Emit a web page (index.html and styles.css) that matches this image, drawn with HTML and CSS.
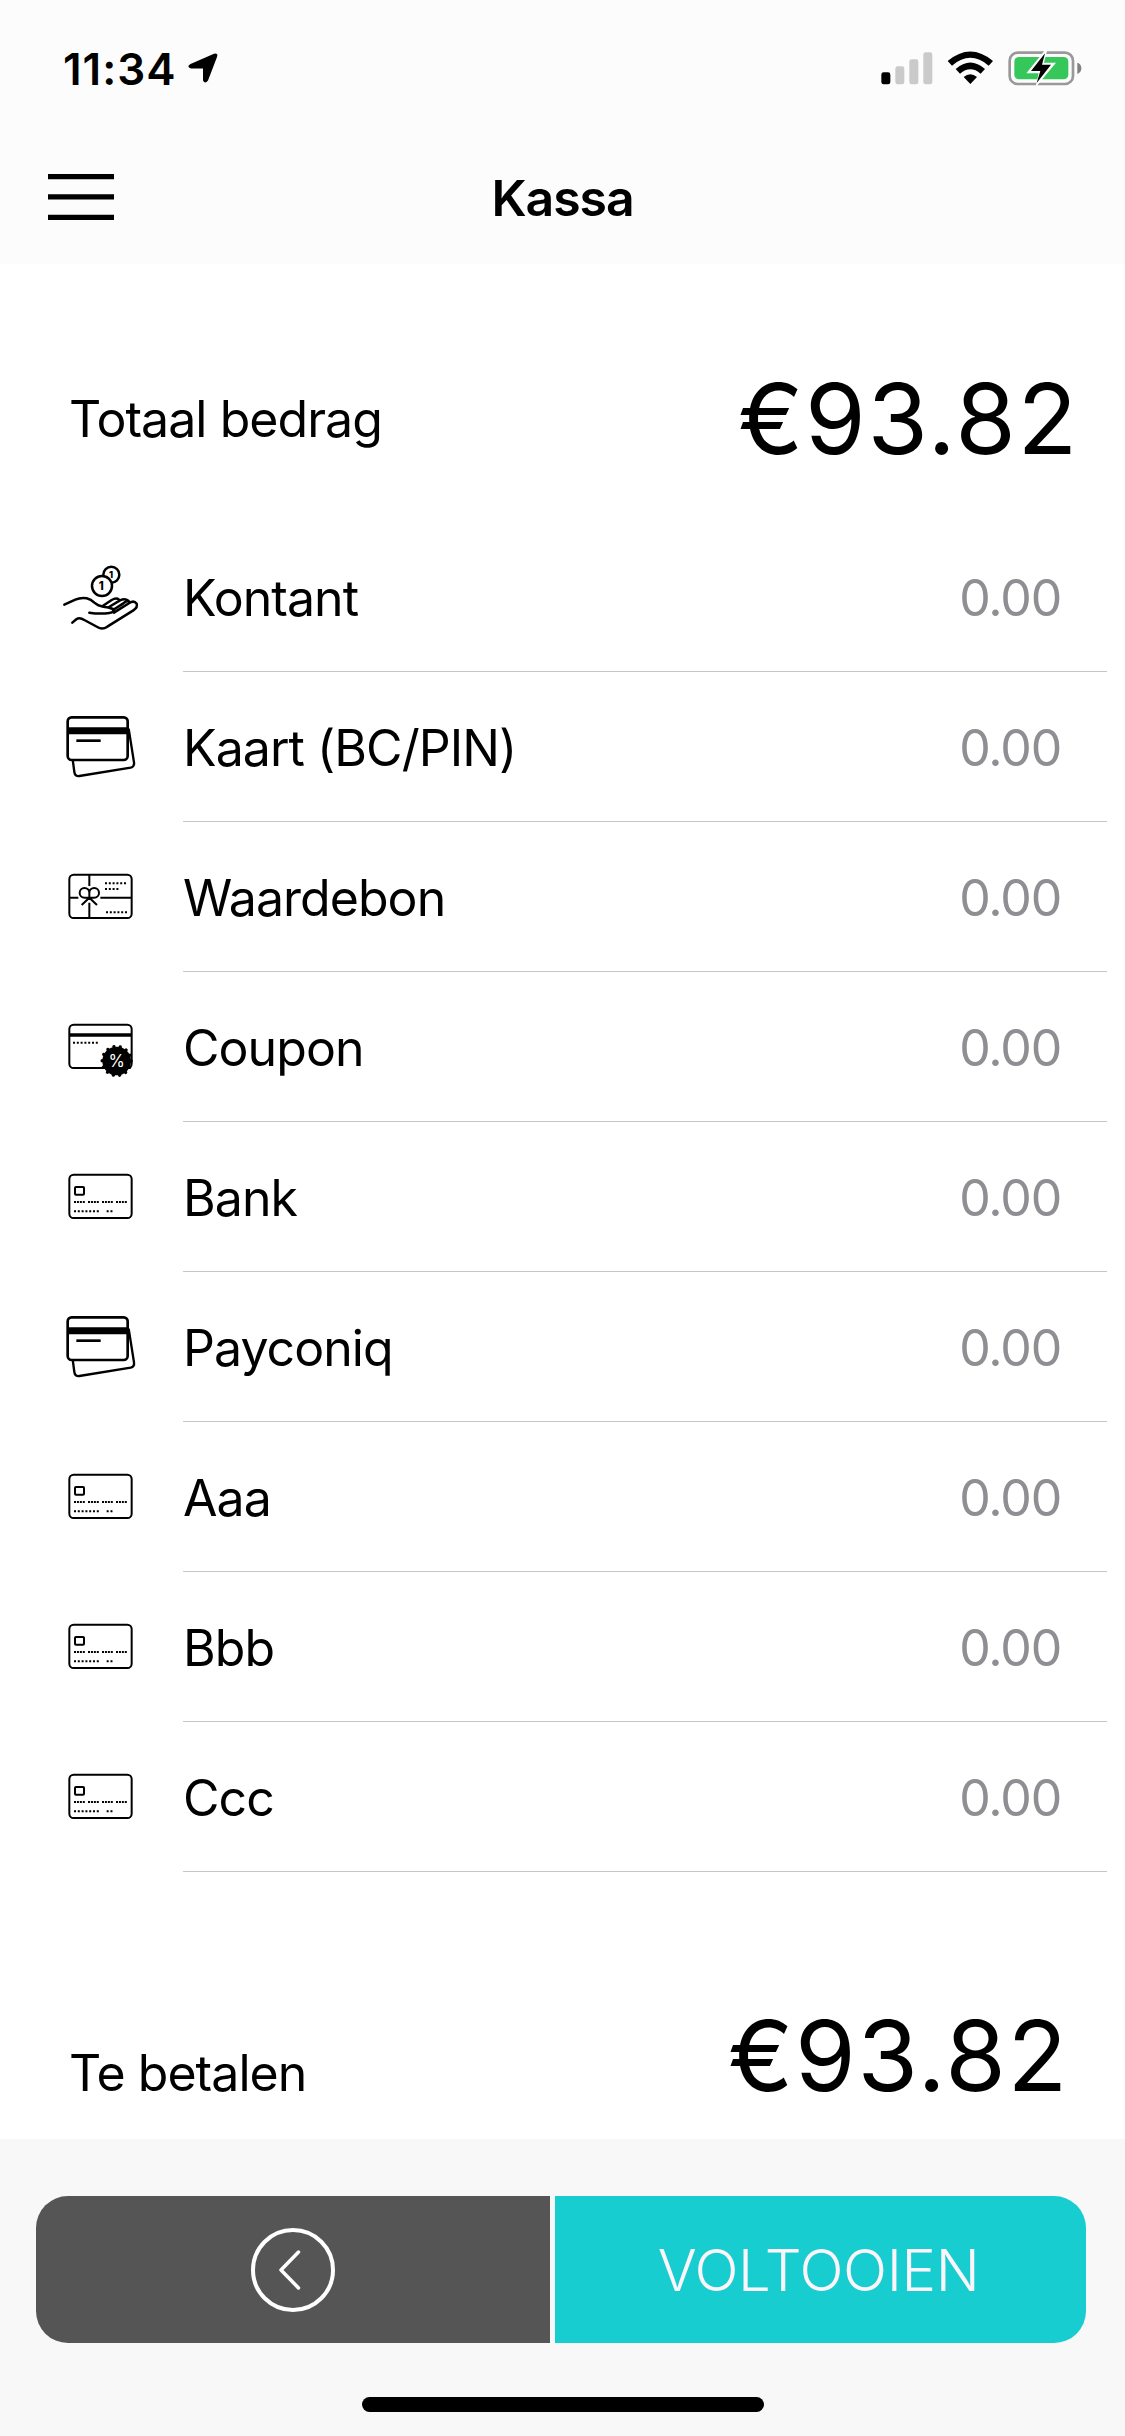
FILE: index.html
```html
<!DOCTYPE html>
<html lang="nl">
<head>
<meta charset="utf-8">
<title>Kassa</title>
<link rel="stylesheet" href="styles.css">
</head>
<body>
<svg class="sprite" width="0" height="0" aria-hidden="true">
  <symbol id="cards" viewBox="0 0 390 450">
    <path d="M98 262L103 300Q105 314 118 312L272 287Q284 284 282 271L266 170" fill="none" stroke="#000" stroke-width="7"/>
    <rect x="83" y="136" width="180" height="128" rx="12" fill="#fff" stroke="#000" stroke-width="8"/>
    <path d="M83 176H263" stroke="#000" stroke-width="21"/>
    <path d="M109 206H182" stroke="#000" stroke-width="8"/>
  </symbol>
  <symbol id="card" viewBox="0 0 390 450">
    <g fill="none" stroke="#000" stroke-width="6">
      <rect x="88" y="158" width="187" height="130" rx="13"/>
      <rect x="105" y="195" width="27" height="23" rx="3"/>
      <path d="M102 240H135M144 240H177M186 240H219M228 240H261" stroke-dasharray="6 2.8"/>
      <path d="M102 268H177M200 268H220" stroke-dasharray="6 5.4"/>
    </g>
  </symbol>
</svg>
<header class="header">
  <div class="status">
    <span class="time">11:34</span>
    <svg class="location" width="30" height="30" viewBox="0 0 30 30"><path d="M2.500 11L26 .8Q30.500 -.5 29 4L20 27.500Q17 31.500 15 27.500V15.500H3Q-2 14 2.500 11Z"/></svg>
    <svg class="signals" width="201" height="36" viewBox="0 0 603 108">
      <rect x="1" y="64" width="27" height="36" rx="7"/>
      <g fill="#cacaca"><rect x="43" y="46" width="27" height="54" rx="7"/><rect x="85" y="25" width="27" height="75" rx="7"/><rect x="127" y="4" width="27" height="96" rx="7"/></g>
      <path d="M200 30Q268 -27 336 30L323 44Q268 -3 213 44ZM224 54Q268 15 312 54L299 68Q268 42 237 68ZM248 78Q268 62 288 78L268 99Z"/>
      <rect x="386" y="5" width="190" height="94" rx="24" fill="none" stroke="#999" stroke-width="8"/>
      <rect x="400" y="18" width="162" height="67" rx="14" fill="#35c759"/>
      <path d="M589 35Q601 39 601 52Q601 65 589 69Z" fill="#808080"/>
      <path d="M493 -4L436 67H473L463 110L525 35H489L499 -4Z" fill="#fdfdfd"/>
      <path d="M492 7L450 60H478L467 96L510 41H483Z"/>
    </svg>
  </div>
  <div class="navbar">
    <svg class="menu" width="66" height="46" viewBox="0 0 66 46"><path d="M0 0H66V5.300H0ZM0 20.200H66V25.500H0ZM0 40.700H66V46H0Z"/></svg>
    <h1 class="title">Kassa</h1>
  </div>
</header>
<main class="content">
  <section class="total total-top"><span class="label">Totaal bedrag</span><span class="amount">€93.82</span></section>
  <ul class="methods">
    <li class="method">
      <svg class="icon" viewBox="0 0 390 450">
        <g fill="none" stroke="#000" stroke-width="7.5" stroke-linecap="round" stroke-linejoin="round">
          <circle cx="214" cy="158" r="24"/>
          <circle cx="186" cy="192" r="30" fill="#fff"/>
          <path d="M73 248L106 233Q122 226 140 229Q153 232 163 242Q174 252 190 254Q206 255 219 261Q226 271 208 273Q179 277 148 272"/>
          <path d="M188 252L215 234Q229 226 237 233M207 255L240 235Q255 228 265 236M219 264L250 244Q262 235 267 238M222 272L268 243Q282 234 290 245Q294 256 280 265L202 314Q187 324 172 315L133 294Q119 285 110 291L97 302"/>
        </g>
        <g class="coin-digit"><text x="184" y="204" font-size="34">1</text><text x="213" y="169" font-size="28">1</text></g>
      </svg>
      <div class="line"><span class="name">Kontant</span><span class="value">0.00</span></div>
    </li>
    <li class="method"><svg class="icon"><use href="#cards"/></svg><div class="line"><span class="name">Kaart (BC/PIN)</span><span class="value">0.00</span></div></li>
    <li class="method">
      <svg class="icon" viewBox="0 0 390 450" fill="none" stroke="#000" stroke-width="6">
        <rect x="88" y="158" width="187" height="130" rx="13"/>
        <path d="M148 158V192M148 242V288M88 227H115M181 227H275"/>
        <path d="M148 228V212A14.500 14.500 0 1 0 133.500 227H162.500A14.500 14.500 0 1 0 148 212M148 227L125 249M148 227L171 249"/>
        <path d="M195 184H259M195 201H236M198 271H262" stroke-dasharray="6 5.4"/>
      </svg>
      <div class="line"><span class="name">Waardebon</span><span class="value">0.00</span></div>
    </li>
    <li class="method">
      <svg class="icon" viewBox="0 0 390 450">
        <rect x="88" y="158" width="187" height="130" rx="13" fill="none" stroke="#000" stroke-width="6"/>
        <path d="M88 189H275" stroke="#000" stroke-width="11"/>
        <path d="M99 212H175" stroke="#000" stroke-width="6" stroke-dasharray="6 5.4"/>
        <circle cx="230" cy="267" r="43"/>
        <circle cx="230" cy="267" r="43.5" fill="none" stroke="#000" stroke-width="10" stroke-linecap="round" stroke-dasharray="0.1 19.42"/>
        <text class="percent" x="230" y="285" font-size="50">%</text>
      </svg>
      <div class="line"><span class="name">Coupon</span><span class="value">0.00</span></div>
    </li>
    <li class="method"><svg class="icon"><use href="#card"/></svg><div class="line"><span class="name">Bank</span><span class="value">0.00</span></div></li>
    <li class="method"><svg class="icon"><use href="#cards"/></svg><div class="line"><span class="name">Payconiq</span><span class="value">0.00</span></div></li>
    <li class="method"><svg class="icon"><use href="#card"/></svg><div class="line"><span class="name">Aaa</span><span class="value">0.00</span></div></li>
    <li class="method"><svg class="icon"><use href="#card"/></svg><div class="line"><span class="name">Bbb</span><span class="value">0.00</span></div></li>
    <li class="method"><svg class="icon"><use href="#card"/></svg><div class="line"><span class="name">Ccc</span><span class="value">0.00</span></div></li>
  </ul>
  <section class="total total-bottom"><span class="label">Te betalen</span><span class="amount">€93.82</span></section>
</main>
<footer class="footer">
  <div class="actions">
    <button class="back" aria-label="Terug"><svg width="84" height="84" viewBox="0 0 84 84" fill="none" stroke="#fff" stroke-width="4" stroke-linecap="round" stroke-linejoin="round"><circle cx="42" cy="42" r="40"/><path d="M47.500 24L30 42L47.500 60" stroke-width="3.500"/></svg></button>
    <button class="finish">VOLTOOIEN</button>
  </div>
  <div class="home"></div>
</footer>
</body>
</html>
```
FILE: styles.css
```css
* { box-sizing: border-box; }
body {
  margin: 0;
  width: 1125px;
  height: 2436px;
  display: flex;
  flex-direction: column;
  background: #fff;
  color: #000;
  font-family: Inter, "Liberation Sans", sans-serif;
}
.sprite { display: block; position: absolute; }
.coin-digit, .percent { font-family: Inter, sans-serif; text-anchor: middle; font-weight: 800; }
.percent { fill: #fff; font-weight: 400; }

.header { height: 264px; background: #fcfcfc; }
.status { height: 132px; padding: 42px 43px 0 63px; display: flex; align-items: flex-start; }
.time { width: 125px; font-size: 44px; line-height: 54px; font-weight: 600; letter-spacing: 1px; white-space: nowrap; }
.location { margin-top: 11px; }
.signals { margin: 9px 0 0 auto; }
.navbar { height: 132px; padding: 0 48px; display: grid; grid-template-columns: 66px 1fr 66px; align-items: start; }
.menu { margin-top: 42px; }
.title { margin: 36px 0 0; font-size: 50px; line-height: 60px; font-weight: 600; letter-spacing: -1.1px; text-align: center; }

.content { flex: 1; }
.total { display: flex; justify-content: space-between; align-items: baseline; }
.total-top { height: 258px; padding: 105px 46px 0 69px; align-items: flex-start; }
.total-bottom { padding: 134px 56px 0 69px; }
.label, .name { font-size: 50px; line-height: 60px; letter-spacing: -.95px; }
.total-top .label { margin-top: 20px; }
.amount { font-size: 98px; line-height: 100px; font-weight: 380; letter-spacing: 1.7px; }

.methods { margin: 0; padding: 0; list-style: none; }
.method { height: 150px; display: flex; padding: 0 18px 0 40px; }
.icon { width: 130px; height: 150px; margin-right: 13px; flex: none; }
.line { flex: 1; display: flex; justify-content: space-between; align-items: center; padding: 2px 46px 0 0; border-bottom: 1px solid #c6c6c8; }
.value { font-size: 50px; line-height: 60px; letter-spacing: -1.2px; color: #8e8e93; }

.footer { height: 297px; padding-top: 57px; background: #f8f8f8; }
.actions { height: 147px; padding: 0 39px 0 36px; display: grid; grid-template-columns: 514px 1fr; gap: 5px; }
.actions button { display: flex; align-items: center; justify-content: center; border: 0; padding: 0; font-family: inherit; }
.back { background: #555; border-radius: 32px 0 0 32px; }
.actions .finish { padding-right: 4px; background: #18cdcf; border-radius: 0 32px 32px 0; color: #fbf4fb; font-size: 58px; font-weight: 360; letter-spacing: -.4px; }
.home { width: 402px; height: 15px; margin: 54px auto 0 362px; border-radius: 8px; background: #000; }
```
